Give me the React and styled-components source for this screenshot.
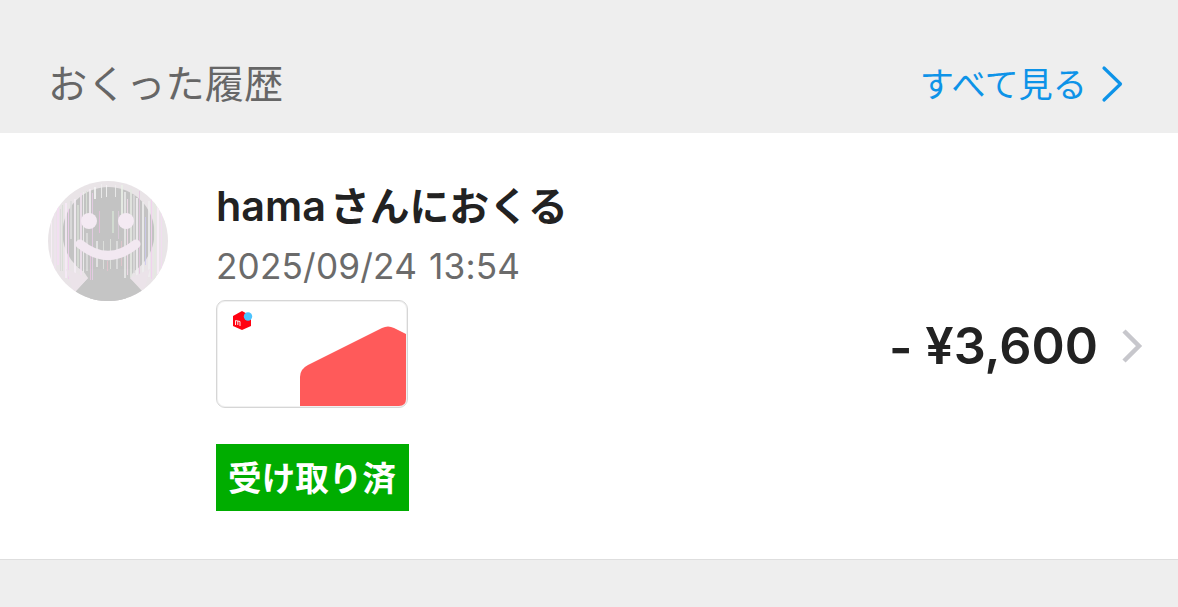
import React from 'react'
import styled, {createGlobalStyle} from 'styled-components'

const GlobalStyle = createGlobalStyle`
  * {
    box-sizing: border-box;
  }
  body {
    margin: 0;
    background: #eeeeee;
    font-family: Inter, "Noto Sans CJK JP", sans-serif;
    color: #222222;
  }
`

const Page = styled.div`
  height: 607px;
  overflow: hidden;
`

const SectionHeader = styled.header`
  display: flex;
  justify-content: space-between;
  align-items: center;
  height: 133px;
  padding: 34px 54px 0 48px;
`

const SectionTitle = styled.h2`
  margin: 0;
  padding-bottom: 5px;
  color: #666666;
  font-family: "Noto Sans CJK JP", sans-serif;
  font-size: 39.2px;
  font-weight: 400;
  line-height: 56px;
`

const SeeAll = styled.a`
  display: flex;
  align-items: center;
  gap: 13px;
  color: #0d93e8;
  font-family: "Noto Sans CJK JP", sans-serif;
  font-size: 34.2px;
  line-height: 50px;
  cursor: pointer;
`

const SeeAllLabel = styled.span`
  padding-bottom: 3px;
`

const HistoryItem = styled.article`
  display: flex;
  align-items: flex-start;
  height: 427px;
  padding: 48px 35px 0 48px;
  background: #fff;
  border-bottom: 1px solid #dedede;
`

const AvatarSvg = styled.svg`
  flex: none;
  width: 120px;
  height: 120px;
  margin-right: 48px;
`

const Details = styled.div`
  flex: 1;
`

const Name = styled.h3`
  display: flex;
  align-items: baseline;
  gap: 4px;
  margin: 0;
  height: 52px;
  font-size: 41.3px;
  font-weight: 600;
  line-height: 46px;
`

const Honorific = styled.span`
  font-family: "Noto Sans CJK JP", sans-serif;
  font-size: 39.8px;
  font-weight: 700;
`

const DateText = styled.time`
  display: block;
  height: 67px;
  padding-top: 7px;
  color: #6b6b6b;
  font-size: 35.2px;
  line-height: 52px;
  letter-spacing: 0.15px;
  word-spacing: 2px;
`

const GiftCard = styled.div`
  width: 192px;
  height: 108px;
  overflow: hidden;
  border: 1px solid #d6d6d6;
  border-radius: 9px;
  box-shadow: inset 0 0 0 1px #f1f1f1;

  svg {
    display: block;
  }
`

const StatusBadge = styled.div`
  display: flex;
  justify-content: center;
  align-items: center;
  width: 193px;
  height: 67px;
  margin-top: 36px;
  padding: 0 1px 2px 0;
  background: #00ad00;
  color: #fff;
  font-family: "Noto Sans CJK JP", sans-serif;
  font-size: 33.6px;
  font-weight: 700;
  line-height: 50px;
`

const Amount = styled.div`
  display: flex;
  align-items: center;
  gap: 23px;
  margin-top: 134px;
  font-size: 50.4px;
  font-weight: 600;
  line-height: 62px;
  white-space: nowrap;
`

// the hyphen sits a little low beside the figures
const Minus = styled.span`
  display: inline-block;
  transform: translateY(2px);
`

// x, width, top, height, colour of the thin bands over the avatar
const bands = [
  [3, 1, 36, 50, '#f8eef7'], [6, 2, 32, 58, '#efe3ed'],
  [9, 2, 24, 60, '#f3ddf2'], [12, 1, 28, 62, '#d9d9d9'],
  [14, 1, 24, 66, '#d5ddd2'], [17, 2, 22, 75, '#f7eaf7'], [20, 1, 28, 70, '#f1cdef'],
  [22, 2, 20, 38, '#dcdcdc'], [26, 2, 18, 86, '#f5edf5'], [29, 2, 24, 62, '#d7ddd5'],
  [32, 2, 12, 86, '#f0e0ee'], [35, 1, 11, 80, '#f0f0f0'], [38, 1, 10, 30, '#dbe2d8'],
  [38, 2, 52, 38, '#dcdcdc'], [41, 2, 8, 30, '#f3edf3'], [42, 1, 74, 32, '#e6c6e0'],
  [44, 1, 12, 92, '#e8cce6'], [46, 2, 6, 12, '#f4f4f4'], [48, 2, 60, 26, '#e6e6e6'],
  [51, 1, 30, 22, '#e6bedd'], [53, 1, 3, 14, '#eeeeee'], [55, 1, 60, 28, '#e0e3df'],
  [58, 1, 4, 12, '#f5f5f5'], [59, 1, 80, 10, '#e5c2cd'], [62, 1, 58, 30, '#e0e4de'],
  [64, 2, 30, 22, '#d5dfd3'], [67, 1, 4, 12, '#efefef'], [68, 2, 60, 28, '#dedede'],
  [70, 1, 30, 28, '#dccadb'], [73, 2, 4, 34, '#eaf0e8'], [73, 1, 60, 25, '#e2c4cd'],
  [76, 2, 11, 86, '#e8e8e8'], [79, 1, 18, 76, '#f3dceb'], [82, 2, 8, 88, '#e4e8e2'],
  [85, 2, 14, 78, '#d9d9d9'], [88, 2, 17, 82, '#f1edf1'], [91, 1, 10, 92, '#e4c5df'],
  [94, 2, 21, 80, '#ededed'], [97, 1, 36, 48, '#cbc9ee'], [100, 2, 20, 76, '#ededed'],
  [103, 1, 18, 80, '#f2cfee'], [106, 2, 20, 80, '#e4e9e1'], [109, 2, 25, 68, '#f8edf7'],
  [113, 1, 30, 60, '#f2dcf1'], [116, 1, 36, 46, '#e6e6e6'],
]

const Avatar = () => (
  <AvatarSvg viewBox="0 0 120 120">
    <defs>
      <clipPath id="avatarClip">
        <circle cx="60" cy="60" r="60" />
      </clipPath>
    </defs>
    <g clipPath="url(#avatarClip)">
      <rect width="120" height="120" fill="#e9e4e7" />
      <circle cx="60.5" cy="52" r="46" fill="#c3c3c3" />
      <path d="M34 88h53l-5 9 12 13v10H28v-10l12-13z" fill="#c5c5c5" />
      {bands.map(([x, width, y, height, color]) => (
        <rect key={`${x}-${y}`} x={x} y={y} width={width} height={height} fill={color} opacity="0.85" />
      ))}
      <path d="M42 99h36v21H42z" fill="#c5c5c5" />
      <path d="M18 88 40 97 26 112zM102 88 82 97 96 110z" fill="#ebe3e9" />
      <circle cx="41" cy="40" r="8" fill="#f4eaf3" />
      <circle cx="78" cy="40" r="8" fill="#f4eaf3" />
      <path d="M32 63q28 23 56 0" fill="none" stroke="#f2e8f1" strokeWidth="9" strokeLinecap="round" />
    </g>
  </AvatarSvg>
)

const App = () => {
  return (
    <Page>
      <GlobalStyle />
      <SectionHeader>
        <SectionTitle>おくった履歴</SectionTitle>
        <SeeAll>
          <SeeAllLabel>すべて見る</SeeAllLabel>
          <svg width="24" height="38" viewBox="0 0 24 38" fill="none">
            <path d="M4 3 20.500 19 4 35" stroke="#0d93e8" strokeWidth="3.2" strokeLinecap="round" strokeLinejoin="round" />
          </svg>
        </SeeAll>
      </SectionHeader>
      <HistoryItem>
        <Avatar />
        <Details>
          <Name>
            hama<Honorific>さんにおくる</Honorific>
          </Name>
          <DateText>2025/09/24 13:54</DateText>
          <GiftCard>
            <svg width="190" height="106" viewBox="0 0 190 106">
              <path d="M83 105V76q0-8 8-12L165 27q6-3 12 0l12 6V98q0 7-7 7z" fill="#ff5a5a" />
              <path d="M25 10 34 15V25L25 29 16 25V15z" fill="#ff0211" />
              <circle cx="31" cy="15.500" r="4.200" fill="#4dc4ff" />
              <path d="M18.500 24v-4.500l4.500 1v4.500M20.800 20v4" fill="none" stroke="#fff" strokeWidth="0.9" />
            </svg>
          </GiftCard>
          <StatusBadge>受け取り済</StatusBadge>
        </Details>
        <Amount>
          <span>
            <Minus>-</Minus> ¥3,600
          </span>
          <svg width="22" height="36" viewBox="0 0 22 36" fill="none">
            <path d="M3 3 18 18 3 33" stroke="#c7c7cc" strokeWidth="4.500" />
          </svg>
        </Amount>
      </HistoryItem>
    </Page>
  )
}

export default App
